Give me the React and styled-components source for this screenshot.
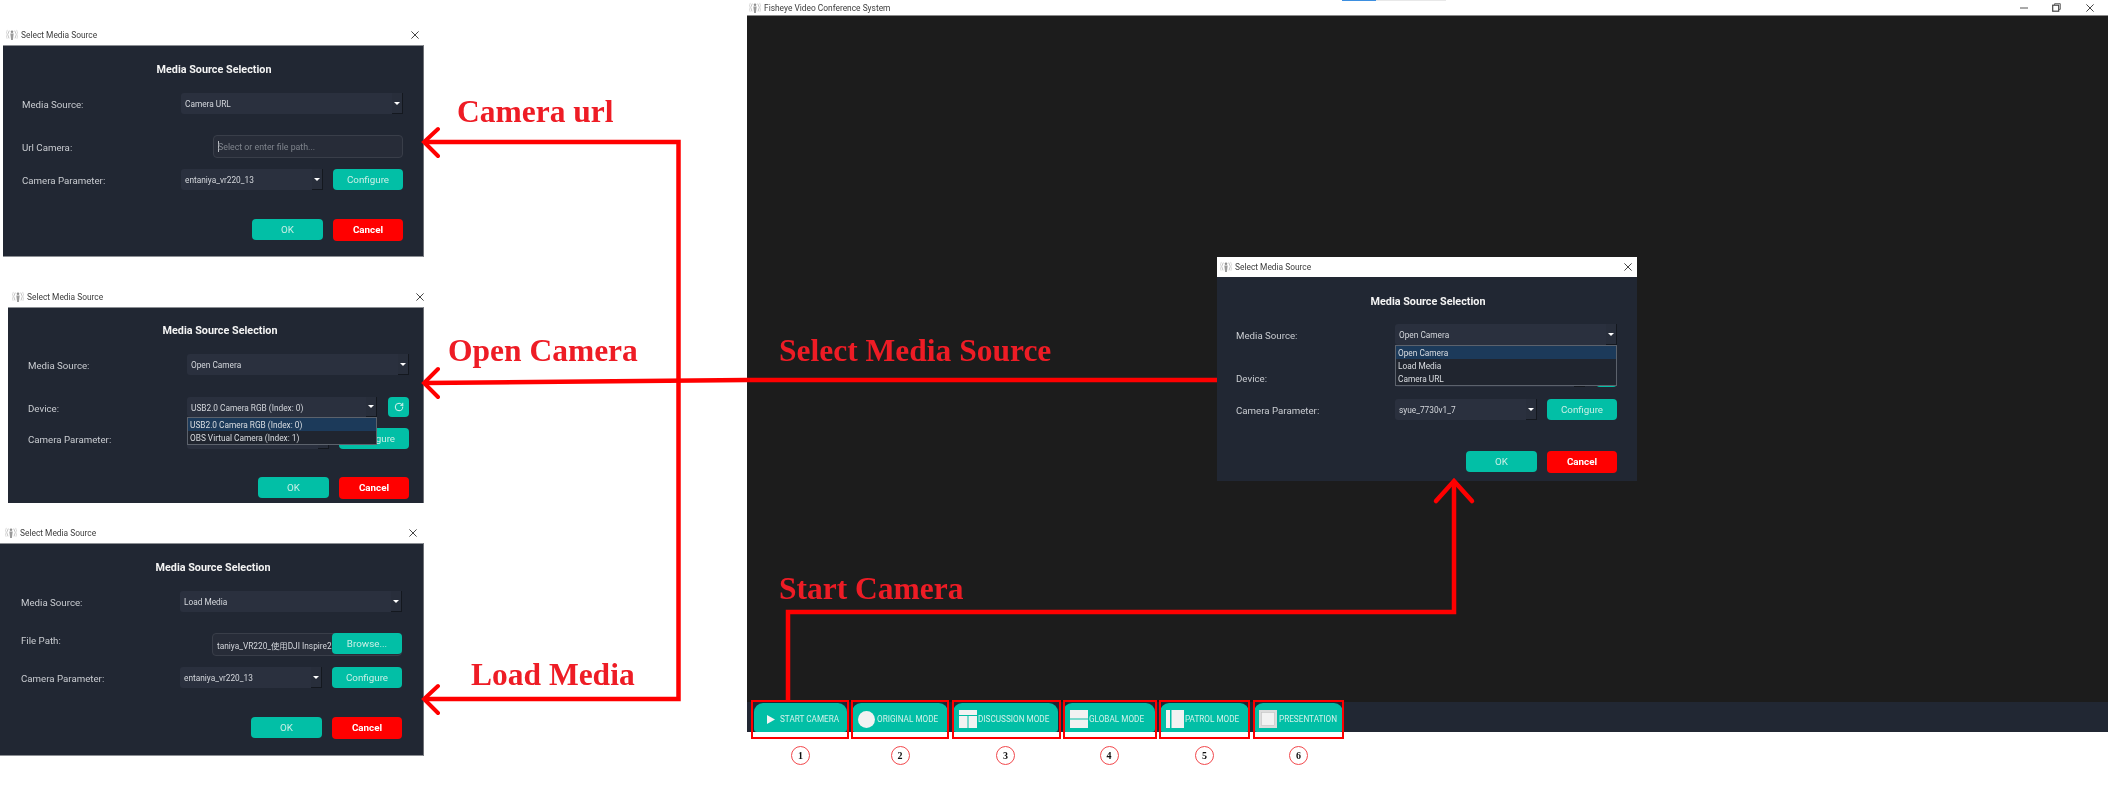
import React from 'react';
import styled, { createGlobalStyle } from 'styled-components';
import { RotateCw } from 'lucide-react';

const Global = createGlobalStyle`
  html, body { margin: 0; padding: 0; background: #fff; }
  body { font-family: Roboto, "Noto Sans", "Noto Sans CJK SC", sans-serif; overflow: hidden; }
  * { box-sizing: border-box; }
`;

const Canvas = styled.div`
  position: relative;
  width: 2108px;
  height: 793px;
  background: #fff;
  overflow: hidden;
  filter: blur(0.3px);
`;

/* ---------- dialog ---------- */
const DialogWindow = styled.section`
  position: absolute;
  left: ${p => p.$x}px;
  top: ${p => p.$y}px;
  width: ${p => p.$w}px;
  z-index: ${p => p.$z || 1};
  display: flex;
  flex-direction: column;
`;
const DialogTitleBar = styled.header`
  height: 20px;
  background: #fff;
  display: flex;
  align-items: center;
  padding-left: ${p => p.$inset + 3}px;
  padding-right: ${p => p.$closeRight}px;
  color: #3c3c3c;
  font-size: 8.4px;
  gap: 3px;
`;
const DialogTitle = styled.span`
  flex: 1;
  white-space: nowrap;
`;
const DialogBody = styled.div`
  height: ${p => p.$h}px;
  background: #212733;
  padding: ${p => p.$pt}px 0 0 ${p => p.$inset + 19}px;
  border-top: ${p => (p.$framed ? '1px solid #8c8f94' : 'none')};
  border-bottom: ${p => (p.$framed && p.$bottom ? '1px solid #8c8f94' : 'none')};
  border-right: ${p => (p.$framed ? '1px solid #6e7177' : 'none')};
  overflow: hidden;
`;
const DialogContent = styled.div`
  width: 381px;
  display: flex;
  flex-direction: column;
`;
const Heading = styled.h2`
  height: 22px;
  margin: 0;
  padding-left: 3px;
  font-size: 10.8px;
  line-height: 24px;
  font-weight: 700;
  text-align: center;
  color: #f4f4f4;
`;
const Row = styled.div`
  height: ${p => p.$h}px;
  margin-top: ${p => p.$mt}px;
  display: flex;
  align-items: ${p => (p.$alignTop ? 'flex-start' : 'center')};
`;
const RowLabel = styled.label`
  width: 159px;
  flex: none;
  color: #c9ccd1;
  font-size: 9.7px;
  padding-top: 2px;
  white-space: nowrap;
`;
const Field = styled.div`
  width: 222px;
  height: 100%;
  display: flex;
  gap: ${p => p.$gap || 0}px;
`;
const Combo = styled.div`
  position: relative;
  width: ${p => p.$w}px;
  height: 100%;
  background: #2a303e;
  border-radius: 3px;
  display: flex;
  align-items: center;
  color: #d4d7dc;
  font-size: 8.3px;
  padding-left: 4px;
`;
const ComboValue = styled.span`
  flex: 1;
  padding-top: 1px;
  white-space: nowrap;
  overflow: hidden;
`;
const ComboArrow = styled.span`
  width: 11px;
  height: 100%;
  flex: none;
  display: flex;
  align-items: center;
  justify-content: center;
  background: #282e3b;
  border-right: 1px solid #14181f;
  border-bottom: 1px solid #14181f;
  &::after {
    content: '';
    border-left: 3px solid transparent;
    border-right: 3px solid transparent;
    border-top: 3px solid #fff;
  }
`;
const DropList = styled.ul`
  position: absolute;
  left: 0;
  top: 100%;
  width: 100%;
  margin: 0;
  padding: 0;
  list-style: none;
  background: #20252f;
  border: 1px solid #5c626c;
  z-index: 3;
  color: #dadde1;
  font-size: 8.3px;
`;
const DropItem = styled.li`
  height: 13px;
  line-height: 14px;
  padding-left: 2px;
  white-space: nowrap;
  background: ${p => (p.$active ? '#1c3a5a' : 'transparent')};
`;
const TextInput = styled.div`
  flex: 1;
  height: 100%;
  margin-left: ${p => p.$indent}px;
  background: #272c38;
  border: 1px solid #393e49;
  border-radius: 4px;
  display: flex;
  align-items: center;
  padding-left: 4px;
  font-size: ${p => (p.$placeholder ? 8.8 : 8.3)}px;
  color: ${p => (p.$placeholder ? '#7f848c' : '#d4d7dc')};
  white-space: nowrap;
  overflow: hidden;
`;
const Caret = styled.span`
  width: 1px;
  height: 11px;
  background: #b8bbc0;
  margin-right: -1px;
  flex: none;
`;
const FileRowField = styled.div`
  position: relative;
  width: 222px;
  height: 100%;
  display: flex;
`;
const ActionButton = styled.button`
  width: ${p => p.$w || 70}px;
  height: ${p => p.$h || 21}px;
  flex: none;
  border: none;
  padding: 0;
  border-radius: 4px;
  background: ${p => (p.$danger ? '#ff0000' : '#02bfa6')};
  color: ${p => (p.$danger ? '#fff' : '#c9efe6')};
  font: ${p => (p.$danger ? 700 : 400)} 9.8px Roboto, sans-serif;
  display: flex;
  align-items: center;
  justify-content: center;
`;
const OverlayButton = styled(ActionButton)`
  position: absolute;
  right: 0;
  top: 0;
`;
const Footer = styled.div`
  margin-top: ${p => p.$mt}px;
  display: flex;
  justify-content: flex-end;
  align-items: center;
  gap: 10px;
  height: 21px;
`;

/* ---------- main window ---------- */
const MainWindow = styled.main`
  position: absolute;
  left: 747px;
  top: 0;
  width: 1361px;
  height: 732px;
  display: flex;
  flex-direction: column;
`;
const MainTitleBar = styled.header`
  height: 16px;
  flex: none;
  background: #fff;
  border-bottom: 1px solid #8a8a8a;
  display: flex;
  align-items: center;
  padding-left: 2px;
  gap: 3px;
  color: #3c3c3c;
  font-size: 8.4px;
  position: relative;
`;
const MainTitle = styled.span`
  flex: 1;
  white-space: nowrap;
`;
const TabStrip = styled.div`
  position: absolute;
  left: 595px;
  top: 0;
  display: flex;
  height: 1px;
`;
const TabMark = styled.span`
  width: ${p => p.$w}px;
  background: ${p => p.$c};
`;
const WindowControls = styled.div`
  display: flex;
  padding-right: 2px;
`;
const WindowControl = styled.span`
  width: 33px;
  height: 15px;
  display: flex;
  align-items: center;
  justify-content: center;
`;
const Stage = styled.div`
  flex: 1;
  background: #1c1c1c;
`;
const Toolbar = styled.div`
  height: 30px;
  flex: none;
  background: #212733;
  display: flex;
  gap: 5px;
  padding: 1px 0 0 7px;
`;
const ToolCell = styled.div`
  position: relative;
  width: ${p => p.$w}px;
  height: 29px;
`;
const ToolButton = styled.button`
  width: 100%;
  height: 100%;
  border: none;
  border-radius: 9px 9px 3px 3px;
  background: #02bfa6;
  color: #d2f1ea;
  font: 400 8.2px Roboto, sans-serif;
  white-space: nowrap;
  display: flex;
  align-items: center;
  gap: ${p => p.$gap}px;
  padding: 3px 0 0 ${p => p.$pad}px;
`;
const CellFrame = styled.span`
  position: absolute;
  top: -3px;
  bottom: -7px;
  left: ${p => p.$l}px;
  right: ${p => p.$r}px;
  border: 2px solid #ff0000;
  pointer-events: none;
`;
const StepBadge = styled.span`
  position: absolute;
  left: 50%;
  top: 43px;
  width: 19px;
  height: 19px;
  margin-left: -9.5px;
  border-radius: 50%;
  border: 1.5px solid #f2484c;
  background: #fff;
  color: #111;
  font: 700 10px "Liberation Serif", serif;
  display: flex;
  align-items: center;
  justify-content: center;
`;

/* ---------- annotations ---------- */
const Callout = styled.span`
  position: absolute;
  left: ${p => p.$x}px;
  top: ${p => p.$base - 27}px;
  z-index: 5;
  font: 700 31.5px/32px "Liberation Serif", serif;
  color: #ee1c25;
  white-space: nowrap;
`;
const ArrowLayer = styled.svg`
  position: absolute;
  left: 0;
  top: 0;
  z-index: 4;
  pointer-events: none;
`;

/* ---------- small drawings ---------- */
const AppIcon = () => (
  <svg width="12" height="12" viewBox="0 0 12 12" fill="none" style={{ flex: 'none' }}>
    <circle cx="6" cy="2.8" r="1.3" fill="#8f8f8f" />
    <path d="M4.3 4.6h3.4l-.4 3-.4 3.4H5.1l-.4-3.4z" fill="#9a9a9a" />
    <path d="M3.3 1.6A6.5 6.5 0 0 0 3 9.4M8.7 1.6A6.5 6.5 0 0 1 9 9.4" stroke="#bdbdbd" strokeWidth=".9" />
    <path d="M1.4.9A8.5 8.5 0 0 0 1.1 9.8M10.6.9a8.5 8.5 0 0 1 .3 8.9" stroke="#d2d2d2" strokeWidth=".8" />
  </svg>
);
const CloseGlyph = ({ size = 8, color = '#3c3c3c' }) => (
  <svg width={size} height={size} viewBox="0 0 8 8" style={{ flex: 'none' }}>
    <path d="M.4.4l7.2 7.2M7.6.4L.4 7.6" stroke={color} strokeWidth=".95" fill="none" />
  </svg>
);
const MinimizeGlyph = () => (
  <svg width="8" height="2" viewBox="0 0 8 2"><path d="M0 1h8" stroke="#555" strokeWidth="1" /></svg>
);
const RestoreGlyph = () => (
  <svg width="9" height="9" viewBox="0 0 9 9" fill="none">
    <rect x=".7" y="2.2" width="6" height="6" stroke="#444" strokeWidth="1.2" />
    <path d="M2.6 2V.7h5.7v5.7H7" stroke="#555" strokeWidth=".9" />
  </svg>
);

const PlayIcon = () => (
  <svg width="8" height="9" viewBox="0 0 8 9"><path d="M0 0l8 4.5L0 9z" fill="#f3f3f3" /></svg>
);
const CircleIcon = () => (
  <svg width="17" height="17" viewBox="0 0 17 17"><circle cx="8.5" cy="8.5" r="8.5" fill="#f2f2f2" /></svg>
);
const DiscussionIcon = () => (
  <svg width="18" height="18" viewBox="0 0 18 18" fill="#f2f2f2">
    <rect width="18" height="5" /><rect y="6" width="8.5" height="12" /><rect x="9.5" y="6" width="8.5" height="12" />
  </svg>
);
const GlobalIcon = () => (
  <svg width="18" height="18" viewBox="0 0 18 18" fill="#f2f2f2">
    <rect width="18" height="8.5" /><rect y="9.5" width="18" height="8.5" />
  </svg>
);
const PatrolIcon = () => (
  <svg width="18" height="18" viewBox="0 0 18 18" fill="#f2f2f2">
    <rect width="4" height="18" /><rect x="5.5" width="12.5" height="18" />
  </svg>
);
const PresentIcon = () => (
  <svg width="18" height="18" viewBox="0 0 18 18">
    <rect width="18" height="18" fill="#dcdcdc" /><rect x="2.5" y="2.5" width="13" height="13" fill="#f2f2f2" stroke="#c4c4c4" strokeWidth=".6" />
  </svg>
);

/* ---------- data ---------- */
const tools = [
  { label: 'START CAMERA', w: 93, pad: 13, gap: 5, Icon: PlayIcon, l: -3, r: -2, n: 1 },
  { label: 'ORIGINAL MODE', w: 96, pad: 6, gap: 2, Icon: CircleIcon, l: -1, r: -1, n: 2 },
  { label: 'DISCUSSION MODE', w: 105, pad: 6, gap: 1, Icon: DiscussionIcon, l: -1, r: -3, n: 3 },
  { label: 'GLOBAL MODE', w: 92, pad: 7, gap: 1, Icon: GlobalIcon, l: 0, r: -2, n: 4 },
  { label: 'PATROL MODE', w: 89, pad: 6, gap: 1, Icon: PatrolIcon, l: -1, r: -1, n: 5 },
  { label: 'PRESENTATION', w: 89, pad: 5, gap: 2, Icon: PresentIcon, l: -1, r: -1, n: 6 },
];

const callouts = [
  { text: 'Camera url', x: 457, base: 123 },
  { text: 'Open Camera', x: 448, base: 362 },
  { text: 'Select Media Source', x: 779, base: 362 },
  { text: 'Start Camera', x: 779, base: 600 },
  { text: 'Load Media', x: 471, base: 686 },
];

const Dialog = ({ x, top, w, h, inset, closeRight, pt, framed, bottom, z, children }) => (
  <DialogWindow $x={x} $y={top - 20} $w={w} $z={z}>
    <DialogTitleBar $inset={inset} $closeRight={closeRight}>
      <AppIcon />
      <DialogTitle>Select Media Source</DialogTitle>
      <CloseGlyph />
    </DialogTitleBar>
    <DialogBody $h={h} $inset={inset} $pt={pt} $framed={framed} $bottom={bottom}>
      <DialogContent>
        <Heading>Media Source Selection</Heading>
        {children}
      </DialogContent>
    </DialogBody>
  </DialogWindow>
);

const SourceRow = ({ value, list, mt = 13 }) => (
  <Row $h={21} $mt={mt}>
    <RowLabel>Media Source:</RowLabel>
    <Field>
      <Combo $w={222}>
        <ComboValue>{value}</ComboValue>
        <ComboArrow />
        {list}
      </Combo>
    </Field>
  </Row>
);

const ParamRow = ({ value, mt }) => (
  <Row $h={21} $mt={mt}>
    <RowLabel>Camera Parameter:</RowLabel>
    <Field $gap={10}>
      <Combo $w={142}>
        <ComboValue>{value}</ComboValue>
        <ComboArrow />
      </Combo>
      <ActionButton>Configure</ActionButton>
    </Field>
  </Row>
);

const DeviceRow = ({ value, list }) => (
  <Row $h={20} $mt={22}>
    <RowLabel>Device:</RowLabel>
    <Field $gap={11}>
      <Combo $w={191}>
        <ComboValue>{value}</ComboValue>
        <ComboArrow />
        {list}
      </Combo>
      <ActionButton $w={21} $h={20}><RotateCw size={10} color="#d8f4ee" strokeWidth={2.4} /></ActionButton>
    </Field>
  </Row>
);

const Actions = ({ mt }) => (
  <Footer $mt={mt}>
    <ActionButton $w={71}>OK</ActionButton>
    <ActionButton $danger $h={22}>Cancel</ActionButton>
  </Footer>
);

export default function App() {
  return (
    <Canvas>
      <Global />

      <Dialog x={3} top={45} w={421} h={212} inset={0} closeRight={5} pt={12} framed bottom>
        <SourceRow value="Camera URL" />
        <Row $h={23} $mt={21}>
          <RowLabel>Url Camera:</RowLabel>
          <Field><TextInput $indent={32} $placeholder><Caret />Select or enter file path...</TextInput></Field>
        </Row>
        <ParamRow value="entaniya_vr220_13" mt={11} />
        <Actions mt={29} />
      </Dialog>

      <Dialog x={8} top={307} w={416} h={196} inset={1} closeRight={0} pt={11} framed>
        <SourceRow value="Open Camera" />
        <DeviceRow value="USB2.0 Camera RGB (Index: 0)" list={
          <DropList>
            <DropItem $active>USB2.0 Camera RGB (Index: 0)</DropItem>
            <DropItem>OBS Virtual Camera (Index: 1)</DropItem>
          </DropList>
        } />
        <ParamRow value="" mt={11} />
        <Actions mt={28} />
      </Dialog>

      <Dialog x={0} top={543} w={424} h={213} inset={2} closeRight={7} pt={12} framed bottom>
        <SourceRow value="Load Media" />
        <Row $h={23} $mt={21} $alignTop>
          <RowLabel>File Path:</RowLabel>
          <FileRowField>
            <TextInput $indent={32}>taniya_VR220_使用DJI Inspire2 (</TextInput>
            <OverlayButton>Browse...</OverlayButton>
          </FileRowField>
        </Row>
        <ParamRow value="entaniya_vr220_13" mt={11} />
        <Actions mt={29} />
      </Dialog>

      <MainWindow>
        <MainTitleBar>
          <AppIcon />
          <MainTitle>Fisheye Video Conference System</MainTitle>
          <TabStrip>
            <TabMark $w={34} $c="#3d8fe0" />
            <TabMark $w={70} $c="#e8e8e8" />
          </TabStrip>
          <WindowControls>
            <WindowControl><MinimizeGlyph /></WindowControl>
            <WindowControl><RestoreGlyph /></WindowControl>
            <WindowControl><CloseGlyph /></WindowControl>
          </WindowControls>
        </MainTitleBar>
        <Stage />
        <Toolbar>
          {tools.map(({ label, w, pad, gap, Icon, l, r, n }) => (
            <ToolCell key={n} $w={w}>
              <ToolButton $pad={pad} $gap={gap}><Icon />{label}</ToolButton>
              <CellFrame $l={l} $r={r} />
              <StepBadge>{n}</StepBadge>
            </ToolCell>
          ))}
        </Toolbar>
      </MainWindow>

      <Dialog x={1217} top={277} w={420} h={204} inset={0} closeRight={5} pt={13} z={2}>
        <SourceRow value="Open Camera" mt={12} list={
          <DropList>
            <DropItem $active>Open Camera</DropItem>
            <DropItem>Load Media</DropItem>
            <DropItem>Camera URL</DropItem>
          </DropList>
        } />
        <DeviceRow />
        <ParamRow value="syue_7730v1_7" mt={12} />
        <Actions mt={31} />
      </Dialog>

      <ArrowLayer width="2108" height="793" viewBox="0 0 2108 793" fill="none" stroke="#ff0000" strokeWidth="4.5">
        <path d="M424 142H678.5V699H424" />
        <path d="M424 383L747 380H1217" />
        <path d="M438 129L424 142L438 156M438 369L424 383L438 397M438 686L424 699L438 713" strokeLinecap="round" strokeWidth="4" />
        <path d="M788 701V612H1454V483" />
        <path d="M1436 501L1454 481L1472 501" strokeLinecap="round" />
      </ArrowLayer>

      {callouts.map(c => (
        <Callout key={c.text} $x={c.x} $base={c.base}>{c.text}</Callout>
      ))}
    </Canvas>
  );
}
